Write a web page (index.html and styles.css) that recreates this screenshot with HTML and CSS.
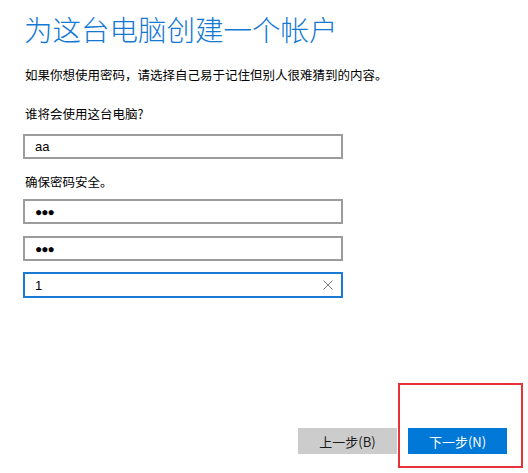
FILE: index.html
```html
<!DOCTYPE html>
<html lang="zh-CN">
<head>
  <meta charset="UTF-8">
  <title>为这台电脑创建一个帐户</title>
  <link rel="stylesheet" href="styles.css">
</head>
<body>
  <div class="page">
    <h1>为这台电脑创建一个帐户</h1>
    <p class="hint">如果你想使用密码，请选择自己易于记住但别人很难猜到的内容。</p>

    <label class="label">谁将会使用这台电脑?</label>
    <div class="textbox">aa</div>

    <label class="label label-pw">确保密码安全。</label>
    <div class="textbox pw">●●●</div>
    <div class="textbox pw">●●●</div>
    <div class="textbox focused">
      <span>1</span>
      <svg class="clear" width="10" height="10" viewBox="0 0 10 10">
        <path d="M0.5 0.5 L9.5 9.5 M9.5 0.5 L0.5 9.5" stroke="#7a7a7a" stroke-width="1" fill="none"/>
      </svg>
    </div>

    <div class="footer">
      <button class="btn btn-back">上一步(B)</button>
      <button class="btn btn-next">下一步(N)</button>
      <div class="mark"></div>
    </div>
  </div>
</body>
</html>
```

FILE: styles.css
```css
body {
  margin: 0;
  background-color: #ffffff;
  font-family: "Noto Sans CJK SC", "Noto Sans", sans-serif;
  color: #000000;
}

.page {
  display: flex;
  flex-direction: column;
  align-items: flex-start;
  min-height: 473px;
  box-sizing: border-box;
  padding: 12px 21px 19px 23px;
}

h1 {
  margin: 0 0 0 1px;
  font-size: 28.5px;
  line-height: 34px;
  font-weight: 300;
  color: #1479d4;
}

.hint {
  margin: 21px 0 0 2px;
  font-size: 12.5px;
  line-height: 16px;
}

.label {
  margin: 23px 0 12px 2px;
  font-size: 12.5px;
  line-height: 16px;
}

.label-pw {
  margin-top: 3px;
  margin-bottom: 9px;
}

.textbox {
  display: flex;
  align-items: center;
  justify-content: space-between;
  width: 320px;
  height: 25px;
  box-sizing: border-box;
  padding: 0 8px 0 10px;
  border: 2px solid #9c9c9c;
  font-family: "Liberation Sans", sans-serif;
  font-size: 13px;
  margin-bottom: 12px;
}

.pw {
  font-size: 12px;
  letter-spacing: -1px;
}

.focused {
  border-color: #1b7ad3;
  height: 26px;
  margin-top: -1px;
  margin-bottom: 0;
}

.footer {
  display: flex;
  gap: 11px;
  margin-top: auto;
  align-self: flex-end;
  position: relative;
}

.btn {
  width: 99px;
  height: 26px;
  border: none;
  font-family: "Noto Sans CJK SC", "Noto Sans", sans-serif;
  font-size: 13px;
  padding: 0;
}

.btn-back {
  background-color: #cccccc;
  color: #1a1a1a;
}

.btn-next {
  background-color: #0078d7;
  color: #ffffff;
}

.mark {
  position: absolute;
  left: 100px;
  top: -45px;
  width: 121px;
  height: 81px;
  border: 2px solid #e8323a;
}
```
